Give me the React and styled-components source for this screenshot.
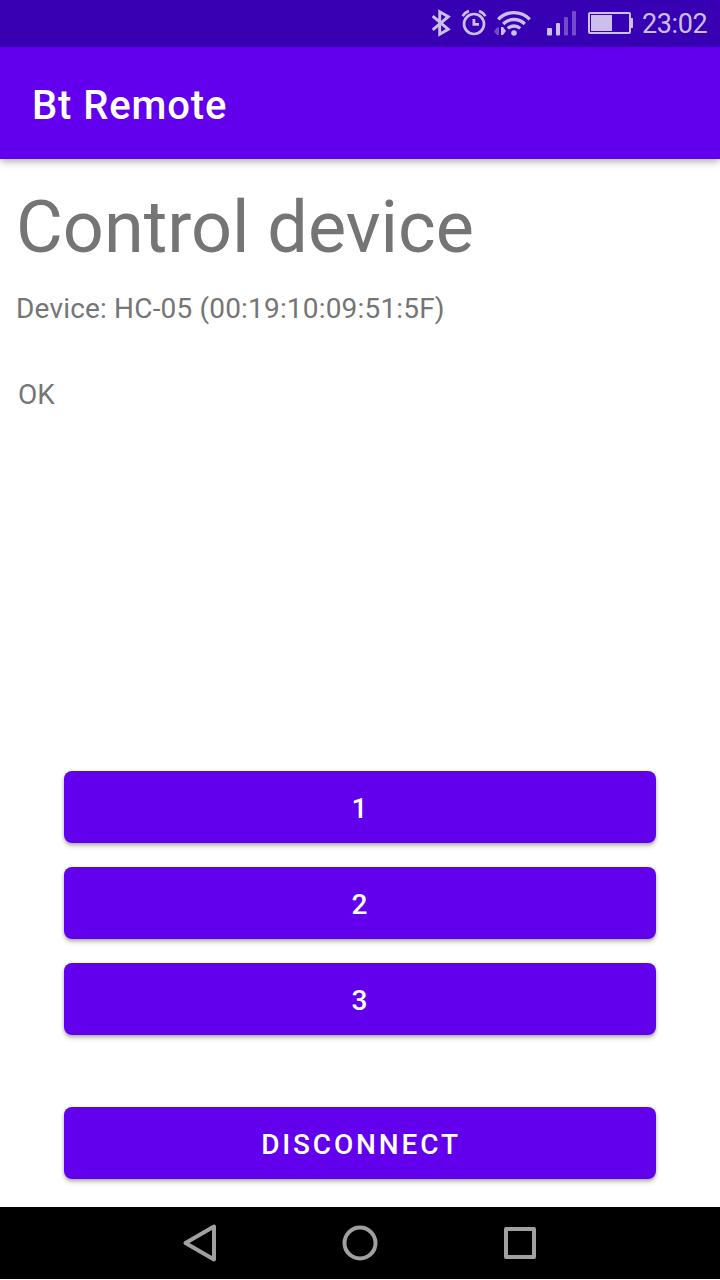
import React from "react";
import styled, { createGlobalStyle } from "styled-components";

const GlobalStyle = createGlobalStyle`
  * { box-sizing: border-box; }
  body { margin: 0; background: #fff; }
`;

const Screen = styled.div`
  width: 720px;
  height: 1279px;
  display: flex;
  flex-direction: column;
  background: #fff;
  font-family: Roboto, "Liberation Sans", sans-serif;
  overflow: hidden;
`;

const StatusBar = styled.div`
  position: relative;
  z-index: 1;
  flex: none;
  height: 47px;
  display: flex;
  justify-content: flex-end;
  padding-right: 12px;
  background: #3700b3;
  color: #cdbfec;
`;

const StatusIcon = styled.svg`
  display: block;
  flex: none;
  height: 47px;
  width: ${(p) => p.$width}px;
  margin-right: ${(p) => p.$gap}px;
`;

const Clock = styled.span`
  width: 66px;
  padding-top: 1px;
  font-size: 27px;
  letter-spacing: -0.4px;
  line-height: 47px;
  white-space: nowrap;
`;

const AppBar = styled.header`
  flex: none;
  height: 112px;
  display: flex;
  align-items: center;
  padding: 6px 32px 0;
  background: #6200ee;
  box-shadow: 0 2px 8px rgba(0, 0, 0, 0.36);
`;

const AppTitle = styled.h1`
  margin: 0;
  color: #fff;
  font-size: 40px;
  font-weight: 500;
  line-height: 48px;
  letter-spacing: 0.87px;
`;

const Content = styled.main`
  flex: 1;
  display: flex;
  flex-direction: column;
  padding: 21px 16px 28px;
  color: #757575;
`;

const Heading = styled.h2`
  margin: 0;
  font-size: 72px;
  font-weight: 400;
  line-height: 96px;
`;

const Line = styled.p`
  margin: ${(p) => p.$top}px 0 0 ${(p) => p.$indent || 0}px;
  font-size: 28px;
  line-height: 38px;
  letter-spacing: ${(p) => p.$tracking || 0}px;
`;

const Actions = styled.div`
  display: flex;
  flex-direction: column;
  gap: 24px;
  margin: auto 48px 0;
`;

const Button = styled.button`
  height: 72px;
  padding: 4px 0 0 2px;
  border: 0;
  border-radius: 8px;
  background: #6200ee;
  color: #fff;
  font: 500 28px/38px Roboto, "Liberation Sans", sans-serif;
  letter-spacing: 2.85px;
  box-shadow: 0 3px 4px rgba(0, 0, 0, 0.25), 0 1px 3px rgba(0, 0, 0, 0.12);
  margin-top: ${(p) => (p.$separate ? 48 : 0)}px;
`;

const NavBar = styled.nav`
  flex: none;
  height: 72px;
  display: flex;
  justify-content: center;
  align-items: center;
  gap: 120px;
  background: #000;
  color: #a0a0a0;
`;

const NavIcon = styled.svg`
  display: block;
  width: 40px;
  height: 40px;
  fill: none;
  stroke: currentColor;
  stroke-width: 4;
  stroke-linejoin: round;
`;

function Status() {
  return (
    <StatusBar>
      <StatusIcon $width={22} $gap={9} viewBox="430 0 22 47" fill="none" stroke="currentColor" strokeWidth="2.9">
        <path d="M432.7 16.2 448.3 29.3 439.7 34.2V11.8L448.3 16.7 432.7 29.8" />
      </StatusIcon>
      <StatusIcon $width={26} $gap={7} viewBox="461 0 26 47" fill="none" stroke="currentColor">
        <circle cx="474" cy="24" r="10" strokeWidth="2.7" />
        <path d="M473.9 19V24.4H479" strokeWidth="2.8" />
        <path d="M462.6 16.3Q464.5 12.6 469 11M485.4 16.3Q483.5 12.6 479 11" strokeWidth="2.5" />
      </StatusIcon>
      <StatusIcon $width={38} $gap={14} viewBox="494 0 38 47">
        <g fill="none" stroke="currentColor" strokeWidth="3.3">
          <path d="M498.2 19.3C507 10.4 521 10.4 529.8 19.3" />
          <path d="M503.2 24C509.2 18 518.8 18 524.8 24" />
          <path d="M507.8 28.4C511.2 25.2 516.8 25.2 520.2 28.4" />
        </g>
        <circle cx="514" cy="33" r="2.8" fill="currentColor" />
        <path d="M497 27.500H499V35H497L494 31.500Z" fill="currentColor" opacity=".4" />
        <path d="M501 26.5V35.5L506.5 31Z" fill="#3700b3" stroke="#3700b3" strokeWidth="1.5" />
        <path d="M501 27V35H503L506 31 503 27Z" fill="currentColor" />
      </StatusIcon>
      <StatusIcon $width={31} $gap={10} viewBox="546 0 31 47" fill="currentColor">
        <rect x="547" y="28" width="5" height="7.5" rx="1" />
        <rect x="556" y="23" width="4" height="12.5" rx="1" />
        <rect x="564" y="17" width="4" height="18.5" rx="1" opacity=".4" />
        <rect x="572" y="11" width="4" height="24.5" rx="1" opacity=".4" />
      </StatusIcon>
      <StatusIcon $width={47} $gap={8} viewBox="587 0 47 47" fill="currentColor">
        <rect x="589" y="13" width="41" height="20" rx="1" fill="none" stroke="currentColor" strokeWidth="2" />
        <rect x="591" y="15" width="21" height="16" />
        <path d="M631 18h1.2a.8.8 0 0 1 .8.8v8.400a.8.8 0 0 1-.8.8H631Z" />
      </StatusIcon>
      <Clock>23:02</Clock>
    </StatusBar>
  );
}

export default function App() {
  return (
    <>
      <GlobalStyle />
      <Screen>
        <Status />
        <AppBar>
          <AppTitle>Bt Remote</AppTitle>
        </AppBar>
        <Content>
          <Heading>Control device</Heading>
          <Line $top={14} $tracking={0.18}>Device: HC-05 (00:19:10:09:51:5F)</Line>
          <Line $top={48} $indent={2}>OK</Line>
          <Actions>
            <Button>1</Button>
            <Button>2</Button>
            <Button>3</Button>
            <Button $separate>DISCONNECT</Button>
          </Actions>
        </Content>
        <NavBar>
          <NavIcon viewBox="0 0 40 40">
            <path d="M5.5 20 34 3.500V36.500Z" />
          </NavIcon>
          <NavIcon viewBox="0 0 40 40">
            <circle cx="20" cy="20" r="15.500" />
          </NavIcon>
          <NavIcon viewBox="0 0 40 40">
            <rect x="6" y="6" width="28" height="28" />
          </NavIcon>
        </NavBar>
      </Screen>
    </>
  );
}
